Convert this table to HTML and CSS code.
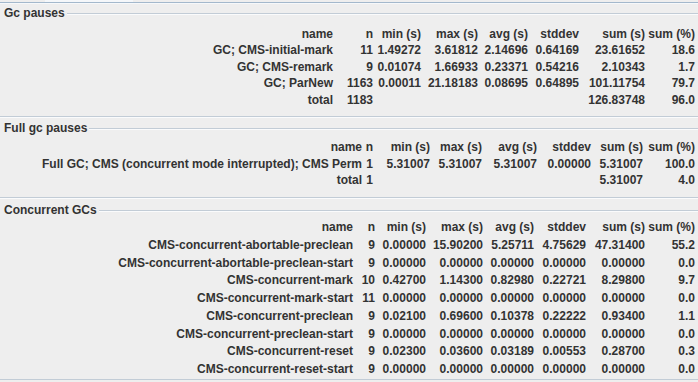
FILE: index.html
```html
<!DOCTYPE html>
<html>
<head>
<meta charset="utf-8">
<title>GC statistics</title>
<link rel="stylesheet" href="styles.css">
</head>
<body>
<div class="tabs"><div class="tab"></div></div>

<section class="panel p1">
  <div class="title"><span>Gc pauses</span></div>
  <div class="grid g1">
    <span>name</span><span>n</span><span>min (s)</span><span>max (s)</span><span>avg (s)</span><span>stddev</span><span>sum (s)</span><span>sum (%)</span>
    <span>GC; CMS-initial-mark</span><span>11</span><span>1.49272</span><span>3.61812</span><span>2.14696</span><span>0.64169</span><span>23.61652</span><span>18.6</span>
    <span>GC; CMS-remark</span><span>9</span><span>0.01074</span><span>1.66933</span><span>0.23371</span><span>0.54216</span><span>2.10343</span><span>1.7</span>
    <span>GC; ParNew</span><span>1163</span><span>0.00011</span><span>21.18183</span><span>0.08695</span><span>0.64895</span><span>101.11754</span><span>79.7</span>
    <span>total</span><span>1183</span><span></span><span></span><span></span><span></span><span>126.83748</span><span>96.0</span>
  </div>
</section>

<section class="panel p2">
  <div class="title"><span>Full gc pauses</span></div>
  <div class="grid g2">
    <span>name</span><span>n</span><span>min (s)</span><span>max (s)</span><span>avg (s)</span><span>stddev</span><span>sum (s)</span><span>sum (%)</span>
    <span>Full GC; CMS (concurrent mode interrupted); CMS Perm</span><span>1</span><span>5.31007</span><span>5.31007</span><span>5.31007</span><span>0.00000</span><span>5.31007</span><span>100.0</span>
    <span>total</span><span>1</span><span></span><span></span><span></span><span></span><span>5.31007</span><span>4.0</span>
  </div>
</section>

<section class="panel p3">
  <div class="title"><span>Concurrent GCs</span></div>
  <div class="grid g3">
    <span>name</span><span>n</span><span>min (s)</span><span>max (s)</span><span>avg (s)</span><span>stddev</span><span>sum (s)</span><span>sum (%)</span>
    <span>CMS-concurrent-abortable-preclean</span><span>9</span><span>0.00000</span><span>15.90200</span><span>5.25711</span><span>4.75629</span><span>47.31400</span><span>55.2</span>
    <span>CMS-concurrent-abortable-preclean-start</span><span>9</span><span>0.00000</span><span>0.00000</span><span>0.00000</span><span>0.00000</span><span>0.00000</span><span>0.0</span>
    <span>CMS-concurrent-mark</span><span>10</span><span>0.42700</span><span>1.14300</span><span>0.82980</span><span>0.22721</span><span>8.29800</span><span>9.7</span>
    <span>CMS-concurrent-mark-start</span><span>11</span><span>0.00000</span><span>0.00000</span><span>0.00000</span><span>0.00000</span><span>0.00000</span><span>0.0</span>
    <span>CMS-concurrent-preclean</span><span>9</span><span>0.02100</span><span>0.69600</span><span>0.10378</span><span>0.22222</span><span>0.93400</span><span>1.1</span>
    <span>CMS-concurrent-preclean-start</span><span>9</span><span>0.00000</span><span>0.00000</span><span>0.00000</span><span>0.00000</span><span>0.00000</span><span>0.0</span>
    <span>CMS-concurrent-reset</span><span>9</span><span>0.02300</span><span>0.03600</span><span>0.03189</span><span>0.00553</span><span>0.28700</span><span>0.3</span>
    <span>CMS-concurrent-reset-start</span><span>9</span><span>0.00000</span><span>0.00000</span><span>0.00000</span><span>0.00000</span><span>0.00000</span><span>0.0</span>
  </div>
</section>
</body>
</html>
```

FILE: styles.css
```css
html, body {
  margin: 0;
  padding: 0;
  background: #eeeeee;
  overflow: hidden;
}

body {
  font-family: "Liberation Sans", Arial, sans-serif;
  font-weight: bold;
  font-size: 12px;
  color: #333333;
}

.tabs {
  height: 2px;
  display: flex;
  border-bottom: 1px solid #a3b8cc;
  box-shadow: 0 1px 0 #f6f8fa;
}

.tab {
  margin-left: 45px;
  width: 88px;
  height: 2px;
  background: #f4f7fa;
}

.panel {
  border-bottom: 1px solid #c2ccd6;
  box-shadow: 0 1px 0 #fafbfc;
}

.p1 { margin-top: 3px; }
.p2 { margin-top: 4px; }
.p3 { margin-top: 5px; }

.title {
  display: flex;
  align-items: center;
  height: 15px;
  line-height: 15px;
  padding-left: 4px;
}

.title::after {
  content: "";
  flex: 1;
  height: 1px;
  margin-left: 2px;
  background: #c2ccd6;
  box-shadow: 0 1px 0 #fafbfc;
}

.grid {
  display: grid;
}

.grid > span {
  text-align: right;
  white-space: nowrap;
}

.g1 {
  padding: 4.5px 0 8px;
  line-height: 16.5px;
  grid-template-columns: 333px 40px 48px 57px 50px 51px 66px 50px;
}

.g2 {
  padding: 3px 0 8.5px;
  line-height: 16.5px;
  grid-template-columns: 362px 11px 57px 52px 55px 54px 52px 52px;
}

.g3 {
  padding: 1px 0 0;
  line-height: 17.75px;
  grid-template-columns: 353px 22px 51px 57px 51px 52px 59px 50px;
}
```
